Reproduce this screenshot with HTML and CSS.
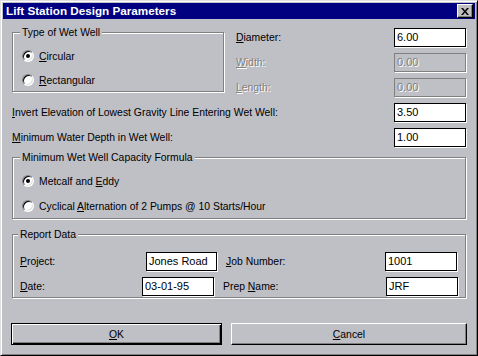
FILE: index.html
```html
<!DOCTYPE html>
<html>
<head>
<meta charset="utf-8">
<link rel="stylesheet" href="styles.css">
</head>
<body>
<div class="window">
  <div class="titlebar">
    <span class="title">Lift Station Design Parameters</span>
    <span class="close"><svg width="8" height="7" viewBox="0 0 8 7"><path d="M0 0h2l2 2.5L6 0h2L5 3.5 8 7H6L4 4.5 2 7H0l3-3.5z" fill="#000"/></svg></span>
  </div>
  <div class="body">
    <div class="top">
      <div class="group g1">
        <span class="legend">Type of Wet Well</span>
        <div class="radio first"><span class="rb checked"></span><span><u>C</u>ircular</span></div>
        <div class="radio"><span class="rb"></span><span><u>R</u>ectangular</span></div>
      </div>
      <div class="dims">
        <div class="field"><span class="lbl"><u>D</u>iameter:</span><span class="input">6.00</span></div>
        <div class="field"><span class="lbl disabled"><u>W</u>idth:</span><span class="input dis">0.00</span></div>
        <div class="field"><span class="lbl disabled"><u>L</u>ength:</span><span class="input dis">0.00</span></div>
      </div>
    </div>
    <div class="field wide r1"><span class="lbl"><u>I</u>nvert Elevation of Lowest Gravity Line Entering Wet Well:</span><span class="input">3.50</span></div>
    <div class="field wide r2"><span class="lbl"><u>M</u>inimum Water Depth in Wet Well:</span><span class="input">1.00</span></div>
    <div class="group g2">
      <span class="legend">Minimum Wet Well Capacity Formula</span>
      <div class="radio first"><span class="rb checked"></span><span>Metcalf and <u>E</u>ddy</span></div>
      <div class="radio r9"><span class="rb"></span><span>Cyclical <u>A</u>lternation of 2 Pumps @ 10 Starts/Hour</span></div>
    </div>
    <div class="group g3">
      <span class="legend">Report Data</span>
      <div class="rrow rr1">
        <span class="lbl l1"><u>P</u>roject:</span><span class="input i1">Jones Road</span>
        <span class="lbl l2"><u>J</u>ob Number:</span><span class="input">1001</span>
      </div>
      <div class="rrow rr2">
        <span class="lbl l1"><u>D</u>ate:</span><span class="input">03-01-95</span>
        <span class="lbl l2">Prep <u>N</u>ame:</span><span class="input">JRF</span>
      </div>
    </div>
    <div class="buttons">
      <span class="btn ok"><u>O</u>K</span>
      <span class="btn cancel"><u>C</u>ancel</span>
    </div>
  </div>
</div>
</body>
</html>
```
FILE: styles.css
```css
html, body { margin: 0; padding: 0; background: #c0c0c0; }
body { font-family: "Liberation Sans", Arial, sans-serif; font-size: 10.4px; color: #000; }
u { text-decoration: underline; text-underline-offset: 1px; }

.window {
  box-sizing: border-box;
  width: 478px; height: 356px;
  background: #bfbfc6;
  border: 1px solid; border-color: #dfdfdf #000 #000 #dfdfdf;
  box-shadow: inset 1px 1px 0 #fff, inset -1px -1px 0 #808080;
  padding: 2px;
  display: flex; flex-direction: column;
}
.titlebar {
  height: 16px; background: #000080; color: #fff;
  display: flex; align-items: center; justify-content: space-between;
  padding: 0 2px 0 3px;
}
.title { font-weight: bold; font-size: 11.7px; line-height: 16px; }
.close {
  box-sizing: border-box; width: 16px; height: 14px;
  background: #c0c0c0;
  border: 1px solid; border-color: #fff #000 #000 #fff;
  box-shadow: inset -1px -1px 0 #808080;
  display: flex; align-items: center; justify-content: center;
}
.body { padding: 7px 9px 0 9px; display: flex; flex-direction: column; }

.top { display: flex; gap: 12px; align-items: flex-start; }
.group {
  border: 1px solid #808080;
  box-shadow: inset 1px 1px 0 #fff, 1px 1px 0 #fff;
  margin-top: 6px;
  padding: 0 9px 3px 9px;
  display: flex; flex-direction: column;
}
.legend {
  display: block; width: fit-content;
  margin: -7px 0 0 -2px; padding: 0 2px;
  background: #bfbfc6; line-height: 13px;
}
.g1 { width: 212px; box-sizing: border-box; padding-bottom: 3px; }
.radio { display: flex; align-items: center; gap: 5px; height: 16px; margin-top: 8px; }
.radio.first { margin-top: 9px; }
.radio.r9 { margin-top: 9px; }
.rb {
  box-sizing: border-box; width: 12px; height: 12px; border-radius: 50%;
  background: #fff;
  border: 1px solid; border-color: #808080 #fff #fff #808080;
  box-shadow: inset 1px 1px 0 #000, inset -1px -1px 0 #dfdfdf;
  display: flex; align-items: center; justify-content: center;
}
.rb.checked::after { content: ""; width: 4px; height: 4px; border-radius: 50%; background: #000; }

.dims { flex: 1; display: flex; flex-direction: column; gap: 6px; margin-top: 2px; }
.field { display: flex; align-items: center; height: 19px; }
.field .lbl { flex: 1; }
.input {
  box-sizing: border-box; width: 72px; height: 19px;
  background: #fff; border: 1px solid #000;
  padding: 0 2px; line-height: 17px; white-space: nowrap;
  font-size: 11px;
  box-shadow: 1px 1px 0 #fff;
}
.input.dis { background: transparent; border-color: #808080; color: #808080; text-shadow: 1px 1px 0 #fff; }
.disabled { color: #808080; text-shadow: 1px 1px 0 #fff; }

.r1 { margin-top: 6px; }
.r2 { margin-top: 6px; }
.g2 { margin-top: 10px; padding-bottom: 4px; }
.g3 { margin-top: 15px; padding: 0 0 1px 7px; }
.rrow { display: flex; align-items: center; height: 19px; }
.rr1 { margin-top: 11px; }
.rr2 { margin-top: 6px; }
.rr1 .l1 { width: 126px; }
.rr1 .i1 { width: 71px; }
.rr1 .l2 { width: 159px; margin-left: 9px; }
.rr2 .l1 { width: 122px; }
.rr2 .l2 { width: 163px; margin-left: 9px; }

.buttons { display: flex; gap: 9px; margin: 25px -1px 0 -1px; }
.btn {
  box-sizing: border-box; height: 22px;
  display: flex; align-items: center; justify-content: center;
  background: #bfbfc6;
}
.ok {
  width: 211px;
  border: 1px solid #000;
  box-shadow: inset 1px 1px 0 #fff, inset -1px -1px 0 #000, inset -2px -2px 0 #808080;
}
.cancel {
  flex: 1;
  border: 1px solid; border-color: #fff #000 #000 #fff;
  box-shadow: inset -1px -1px 0 #808080;
}
```
